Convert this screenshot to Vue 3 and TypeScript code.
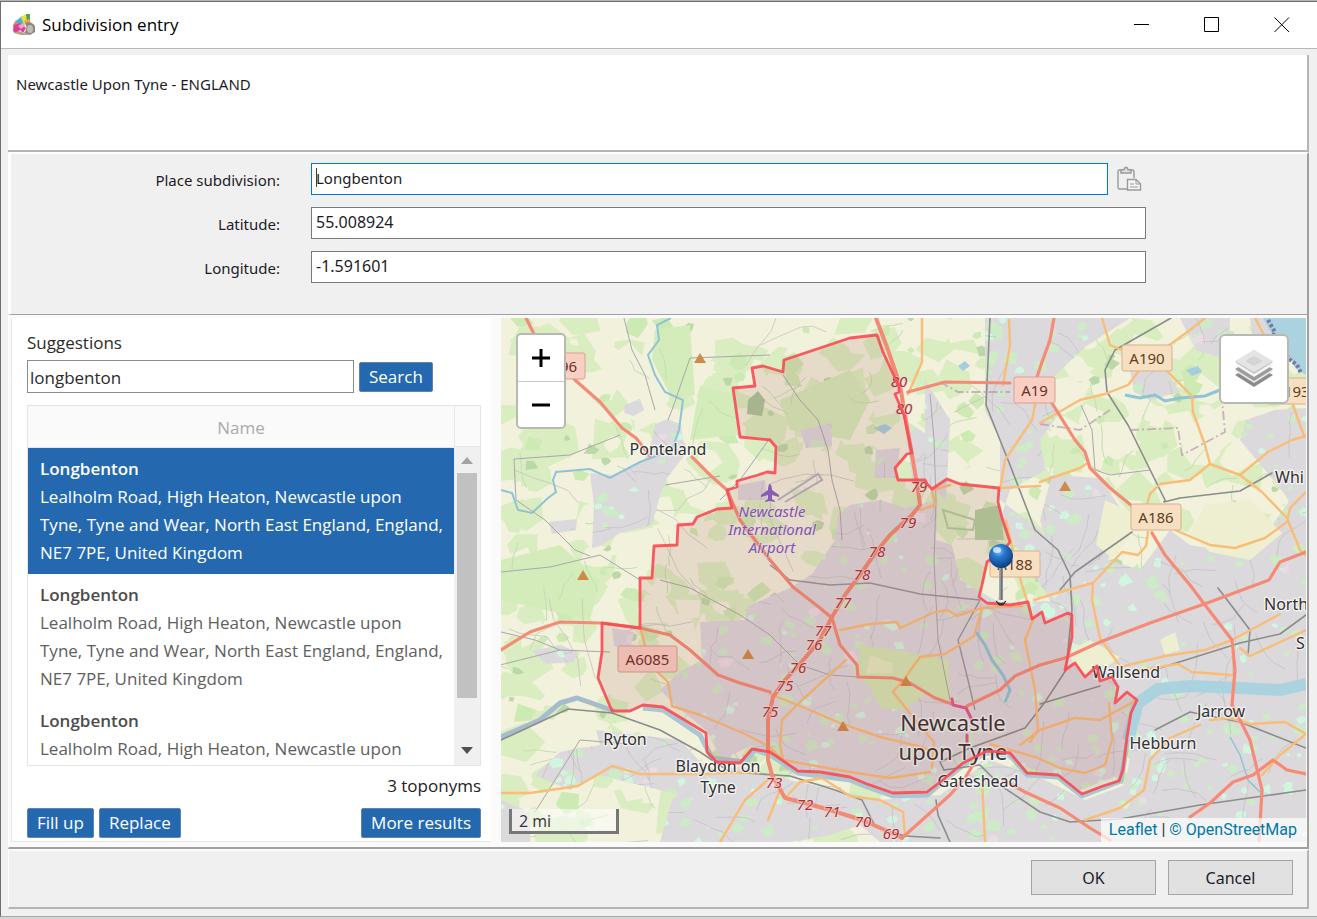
<script setup lang="ts">
import { ref } from 'vue'

interface Place { name: string; address: string }
interface Label { text: string; x: number; y: number; size?: number }
interface Shield { text: string; x: number; y: number; w: number; kind: 'primary' | 'secondary' }

const place = ref('Longbenton')
const latitude = ref('55.008924')
const longitude = ref('-1.591601')
const query = ref('longbenton')
const selected = ref(0)

const street = 'Lealholm Road, High Heaton, Newcastle upon'
const region = 'Tyne, Tyne and Wear, North East England, England, NE7 7PE, United Kingdom'
const places: Place[] = [
  { name: 'Longbenton', address: `${street} ${region}` },
  { name: 'Longbenton', address: `${street} ${region}` },
  { name: 'Longbenton', address: street },
]

// Small seeded generator so the land-use texture is stable between renders.
function makeRandom(seed: number): () => number {
  let s = seed
  return () => {
    s = (s * 1664525 + 1013904223) % 4294967296
    return s / 4294967296
  }
}

function patches(seed: number, count: number, min: number, max: number): string {
  const rnd = makeRandom(seed)
  let d = ''
  for (let i = 0; i < count; i++) {
    const cx = 501 + rnd() * 805
    const cy = 318 + rnd() * 524
    const n = 4 + Math.floor(rnd() * 4)
    const r = min + rnd() * (max - min)
    const turn = rnd() * 6
    for (let k = 0; k < n; k++) {
      const a = turn + (k / n) * Math.PI * 2
      const q = r * (0.55 + rnd() * 0.7)
      d += `${k ? 'L' : 'M'}${(cx + Math.cos(a) * q * 1.2).toFixed(1)} ${(cy + Math.sin(a) * q).toFixed(1)}`
    }
    d += 'Z'
  }
  return d
}

function lanes(seed: number, count: number, len: number): string {
  const rnd = makeRandom(seed)
  let d = ''
  for (let i = 0; i < count; i++) {
    let x = 501 + rnd() * 805
    let y = 318 + rnd() * 524
    let a = rnd() * 6.28
    d += `M${x.toFixed(1)} ${y.toFixed(1)}`
    for (let k = 0; k < 4; k++) {
      a += (rnd() - 0.5) * 0.9
      x += Math.cos(a) * len * (0.5 + rnd())
      y += Math.sin(a) * len * (0.5 + rnd())
      d += `L${x.toFixed(1)} ${y.toFixed(1)}`
    }
  }
  return d
}

const fields = patches(11, 330, 7, 25)
const meadows = patches(29, 110, 4, 12)
const woods = patches(47, 80, 3, 7)
const cream = patches(83, 170, 6, 20)
const parks = patches(61, 480, 2, 7)
const pitches = patches(73, 260, 2, 6)
const estates = patches(97, 60, 2, 7)
const hedges = lanes(5, 110, 8)
const countryLanes = lanes(17, 36, 20)
const streets = lanes(31, 300, 11)

const urban = [
  'M655 424L668 419L681 425L683 440L687 452L667 478L660 495L652 525L620 533L600 546L592 548L594 505L590 473L612 475L645 459L652 440Z',
  'M549 522L577 519L576 530L552 534Z M625 405L640 399L644 410L634 416L624 413Z',
  'M700 622L745 620L748 606L790 588L812 574L835 540L838 516L850 505L880 500L905 508L938 500L936 540L952 545L960 580L1000 603L1075 600L1130 700L1120 775L1080 790L1040 772L985 750L930 790L890 792L800 770L752 745L722 760L706 730L676 706L660 690L680 672L702 660Z',
  'M876 450L900 448L896 478L874 478Z M800 430L832 423L832 446L806 448Z M905 420L935 440L938 490L912 480Z M925 380L950 420L946 500L925 480Z M738 485L765 480L768 500L738 500Z M612 628L634 632L630 650L614 646Z',
  'M985 318L1095 318L1130 318L1085 347L1045 385L1058 415L1040 440L1045 470L1010 490L1000 520L1025 560L1050 600L1080 640L1140 700L1306 700L1306 842L880 842L860 825L830 835L790 842L660 842L672 800L700 775L740 766L790 780L880 800L940 795L990 760L1045 780L1085 800L1125 785L1140 700L1090 660L1070 580L1040 530L1000 500L1000 440L985 410Z',
  'M1052 475L1100 478L1125 515L1108 560L1140 570L1170 530L1190 545L1220 550L1265 535L1290 500L1240 440L1246 420L1275 410L1306 408L1306 720L1100 720L1060 590L1040 520Z',
  'M1130 370L1165 370L1180 392L1150 400L1134 392Z M1180 318L1230 318L1228 360L1196 350Z M1250 318L1275 318L1285 400L1260 400Z',
  'M532 651L560 645L578 652L574 662L546 664Z M596 730L680 740L706 768L700 800L660 790L600 775L570 790L535 775L560 752L600 745Z M501 800L530 812L530 842L501 842Z',
]
const farms = [
  'M1105 500L1130 512L1132 535L1112 558L1096 545Z',
  'M1205 505L1250 500L1282 533L1250 560L1210 552L1190 535Z',
  'M1068 652L1090 640L1120 657L1108 666L1098 664L1085 675L1074 664Z',
  'M1160 640L1175 632L1180 650L1165 655Z',
]
const townMoor = 'M860 645L905 652L948 660L950 702L925 694L905 710L880 708L872 690L858 676Z'

const trunk = [
  'M526 318L536 338L575 380L600 402L622 428L636 438L650 456 M692 457L710 475L727 490L740 520L770 560L793 587L820 608L832 618L840 645L857 665L858 677L893 678L910 683L935 698L952 704',
  'M908 392L945 382L1010 383 M1054 318L1050 340L1042 362L1036 380 M1050 400L1075 440L1085 452L1090 468L1110 488L1132 506 M1152 533L1165 555L1190 585L1205 605L1232 640L1235 670L1232 705L1240 720L1250 740L1262 790L1259 842',
  'M967 706L1000 690L1015 676L1040 665L1065 658L1100 642L1150 623L1210 602L1269 580L1280 562L1306 552',
  'M501 650L530 632L560 622L600 623L640 628L670 635L690 650L718 675L740 683L770 692',
  'M1190 817L1210 803L1233 782L1253 775L1273 760L1287 770L1306 774 M1003 780L1025 792L1060 808L1090 828L1110 840 M902 838L950 795L965 778L975 762',
]
const motorway = 'M876 318L888 350L900 385L905 415L912 455L918 490L920 505L912 515L903 523L890 535L876 552L862 572L845 595L832 617L820 640L805 658L785 680L773 697L768 720L768 760L772 775L785 798L805 803L830 810L862 820L885 830L902 838'
const secondary = [
  'M922 318L922 362L912 385L908 394 M1009 320L1010 345L1003 385',
  'M1102 318L1110 345L1122 350 M1205 318L1190 330L1168 346 M1138 372L1128 385L1105 394L1080 400L1040 423 M1168 372L1184 388L1192 396L1193 412L1205 445L1210 464L1240 475L1262 492L1287 518L1300 550L1306 556',
  'M1210 464L1190 480L1160 484L1150 494L1146 508 M1040 482L1080 468L1086 464 M1240 475L1268 452L1292 440L1306 436 M1306 492L1290 508L1287 522L1265 538L1235 548L1210 545L1175 530',
  'M1148 532L1146 546L1138 555L1122 552L1093 583L1092 600L1100 638L1120 666 M1093 583L1060 592L1034 600 M950 485L932 490L935 505L920 510',
  'M999 488L1040 486 M1000 490L1005 460L1032 420L1036 400 M1006 520L1014 555L1022 585L1033 620L1025 640L1035 690L1038 730L1030 742',
  'M840 630L870 624L897 622L900 628L935 612L948 610L957 616L982 608L1022 606 M982 608L974 636L945 654L920 657L905 678L893 692L920 726L934 742L932 768',
  'M641 630L650 665L668 682L672 706L700 715L745 734L768 746L783 760L850 772L890 778L930 772 M770 694L800 706L840 723L880 737L918 746L935 752',
  'M846 660L800 702L782 720L780 745L783 760 M1137 700L1100 720L1075 718L1040 730L1020 745 M1109 703L1112 740L1105 765L1085 773L1060 768L1038 758L990 744',
  'M1120 667L1165 656L1205 650L1232 640L1260 625L1280 614 M1240 648L1250 656L1276 644L1306 630 M1140 670L1178 664L1192 672L1232 675 M1210 720L1230 718L1250 724L1285 722L1306 734L1280 755L1262 775',
  'M1200 725L1170 738L1150 760L1144 790L1120 808L1085 820 M501 793L530 793L578 786L612 766L640 774L700 774L760 772 M785 798L800 782L822 778L850 796L880 800L903 812L905 835 M982 780L985 842 M768 820L780 790',
  'M1255 318L1272 350 M1292 402L1304 436 M770 778L745 800L720 842',
]
const rails = [
  'M1171 318L1115 350L1105 370L1107 392L1128 425L1165 500L1164 502 M1164 502L1180 498L1240 491L1272 473 M1132 532L1075 572L1060 590 M990 318L986 405L1010 465L1035 530L1058 550L1070 575L1072 610L1066 670L1045 702L1025 728L970 748L940 762L944 770',
  'M501 740L568 709L612 713L660 730L700 752L730 772L790 776L835 790L862 800L875 826L905 836L940 838 M936 800L938 815L950 842 M944 770L980 765L1000 785L1040 812L1070 822L1120 819L1200 805L1306 790',
  'M1100 686L1040 704 M1160 668L1240 643L1280 634L1306 615 M1218 588L1250 630L1248 655 M1155 730L1190 712L1240 722L1306 748',
]
const boundary = 'M752 368L763 366L783 372L784 360L850 338L877 335L883 352L895 378L899 385L899 392L895 394L898 401L904 415L912 453L907 454L895 468L898 480L925 480L927 484L932 489L947 479L960 484L999 488L998 502L1002 518L1010 542L1004 550L987 562L982 585L979 597L987 603L1010 605L1028 602L1032 619L1042 612L1045 623L1068 613L1072 615L1072 637L1065 670L1075 663L1085 677L1097 666L1100 681L1112 677L1118 687L1115 703L1127 692L1137 700L1131 713L1127 737L1123 770L1119 781L1103 786L1082 794L1058 775L1027 773L1010 753L987 751L963 763L943 780L927 792L893 793L867 784L850 777L820 772L798 771L770 752L752 749L740 763L717 762L707 752L706 733L663 707L643 705L630 711L612 711L598 678L602 652L602 623L640 628L640 578L652 578L654 546L677 545L678 525L693 524L697 517L717 509L732 508L727 490L737 487L737 481L758 475L767 472L775 473L776 447L770 440L740 437L733 388L755 386Z'

const towns: Label[] = [
  { text: 'Ponteland', x: 668, y: 455 },
  { text: 'Ryton', x: 625, y: 745 },
  { text: 'Blaydon on', x: 718, y: 772 },
  { text: 'Tyne', x: 718, y: 793 },
  { text: 'Newcastle', x: 953, y: 731, size: 22 },
  { text: 'upon Tyne', x: 953, y: 760, size: 22 },
  { text: 'Gateshead', x: 978, y: 787 },
  { text: 'Wallsend', x: 1126, y: 678 },
  { text: 'Jarrow', x: 1221, y: 717 },
  { text: 'Hebburn', x: 1163, y: 749 },
]
const edgeTowns: Label[] = [
  { text: 'Whi', x: 1275, y: 483 },
  { text: 'North', x: 1264, y: 610 },
  { text: 'S', x: 1296, y: 649 },
]
const airport: Label[] = [
  { text: 'Newcastle', x: 772, y: 517 },
  { text: 'International', x: 772, y: 535 },
  { text: 'Airport', x: 772, y: 553 },
]
const junctions: Label[] = [
  { text: '80', x: 899, y: 387 }, { text: '80', x: 904, y: 414 },
  { text: '79', x: 919, y: 492 }, { text: '79', x: 908, y: 528 },
  { text: '78', x: 877, y: 557 }, { text: '78', x: 862, y: 580 },
  { text: '77', x: 843, y: 608 }, { text: '77', x: 823, y: 636 },
  { text: '76', x: 814, y: 650 }, { text: '76', x: 798, y: 673 },
  { text: '75', x: 785, y: 691 }, { text: '75', x: 770, y: 717 },
  { text: '73', x: 774, y: 788 }, { text: '72', x: 805, y: 810 },
  { text: '71', x: 832, y: 817 }, { text: '70', x: 863, y: 827 },
  { text: '69', x: 891, y: 839 },
]
const shields: Shield[] = [
  { text: 'A696', x: 534, y: 353, w: 51, kind: 'primary' },
  { text: 'A19', x: 1014, y: 377, w: 41, kind: 'primary' },
  { text: 'A190', x: 1122, y: 345, w: 50, kind: 'secondary' },
  { text: 'A193', x: 1267, y: 378, w: 50, kind: 'secondary' },
  { text: 'A186', x: 1131, y: 504, w: 50, kind: 'secondary' },
  { text: 'A188', x: 990, y: 551, w: 50, kind: 'secondary' },
  { text: 'A6085', x: 618, y: 646, w: 59, kind: 'primary' },
]
const peaks = [[700, 358], [583, 575], [1065, 486], [748, 654], [906, 681], [843, 726]]
</script>

<template>
  <div class="desktop">
    <section class="window" aria-label="Subdivision entry">
      <header class="titlebar">
        <svg class="app-icon" viewBox="0 0 24 24" aria-hidden="true">
          <path d="M1 12L4 7L10 12L6 19L2 20Z" fill="#dd8f55" />
          <path d="M4 8L10 3L14 11L8 13Z" fill="#3fb4dc" />
          <path d="M9 4L14 1L17 2L16 8L12 12Z" fill="#ecdf3b" />
          <path d="M14 1L18 1L18 8L15 9Z" fill="#4fa05b" />
          <path d="M12 8L17 6L19 10L14 12Z" fill="#e7a64b" />
          <path d="M2 12L8 10L14 15L11 20L8 17L4 20L1 18Z" fill="#dd3f97" />
          <path d="M6 13L11 10L13 13L9 16Z" fill="#f4a3cd" />
          <path d="M13 10C17 8 21 10 23 13L23 19L18 22L12 20C15 17 15 13 13 10Z" fill="#8f8780" />
          <ellipse cx="18" cy="16" rx="3" ry="4" fill="#c2bcb6" />
          <path d="M2 20L7 18L12 20L18 22L9 22Z" fill="#b9a184" />
        </svg>
        <h1 class="title">Subdivision entry</h1>
        <div class="window-buttons">
          <button type="button" aria-label="Minimize">
            <svg viewBox="0 0 16 16"><path d="M0 7.500H15" stroke="#000" fill="none" /></svg>
          </button>
          <button type="button" aria-label="Maximize">
            <svg viewBox="0 0 16 16"><path d="M0.5 0.5H14.5V14.5H0.5Z" stroke="#000" fill="none" /></svg>
          </button>
          <button type="button" aria-label="Close">
            <svg viewBox="0 0 16 16"><path d="M0.5 0.5L15 15M15 0.5L0.5 15" stroke="#000" fill="none" /></svg>
          </button>
        </div>
      </header>

      <div class="content">
        <div class="place-path">Newcastle Upon Tyne - ENGLAND</div>

        <form class="fields" @submit.prevent>
          <label for="place">Place subdivision:</label>
          <div class="with-paste">
            <div class="active-field">
              <input id="place" v-model="place" type="text" class="field focused" />
              <span class="caret"></span>
            </div>
            <button type="button" class="paste" aria-label="Paste">
              <svg viewBox="0 0 26 26" fill="none" stroke="#9a9a9a">
                <path d="M6 4H3.500Q2 4 2 5.500V21.500Q2 23 3.500 23H11" stroke-width="1.400" />
                <path d="M14 4H16.500Q18 4 18 5.500V12" stroke-width="1.400" />
                <path d="M5 4L8 3.500L9 1.500H11L12 3.500L15 4V7H5Z" fill="#ddd" stroke-width="1.500" />
                <path d="M11.500 13.500H20L24.500 18V24H11.500Z" fill="#f5f5f5" stroke-width="1.400" />
                <path d="M20 13.500V18H24.500M14 18H18M14 21H22" />
              </svg>
            </button>
          </div>
          <label for="latitude">Latitude:</label>
          <input id="latitude" v-model="latitude" type="text" class="field number" />
          <label for="longitude">Longitude:</label>
          <input id="longitude" v-model="longitude" type="text" class="field number" />
        </form>

        <main class="workspace">
          <section class="suggestions">
            <label class="heading" for="query">Suggestions</label>
            <div class="search-row">
              <input id="query" v-model="query" type="text" class="query" />
              <button type="button" class="blue">Search</button>
            </div>
            <div class="results">
              <div class="table-clip">
                <table>
                  <thead>
                    <tr><th scope="col">Name</th></tr>
                  </thead>
                  <tbody>
                    <tr v-for="(p, i) in places" :key="i" :class="{ selected: i === selected }" @click="selected = i">
                      <td><strong>{{ p.name }}</strong><span>{{ p.address }}</span></td>
                    </tr>
                  </tbody>
                </table>
              </div>
              <div class="gutter" aria-hidden="true">
                <div class="gutter-head"></div>
                <div class="scrollbar">
                  <svg viewBox="0 0 12 7"><path d="M0 7L6 0L12 7Z" fill="#a3a3a3" /></svg>
                  <div class="thumb"></div>
                  <svg viewBox="0 0 12 7"><path d="M0 0H12L6 7Z" fill="#505050" /></svg>
                </div>
              </div>
            </div>
            <p class="count">3 toponyms</p>
            <div class="actions">
              <button type="button" class="blue">Fill up</button>
              <button type="button" class="blue">Replace</button>
              <button type="button" class="blue last">More results</button>
            </div>
          </section>

          <section class="map" aria-label="Map">
            <svg class="tiles" viewBox="501 318 805 524" preserveAspectRatio="xMidYMid slice">
              <defs>
                <clipPath id="urban-clip"><path v-for="d in urban" :key="d" :d="d" /></clipPath>
                <radialGradient id="pin-ball" cx="0.4" cy="0.3" r="0.7">
                  <stop offset="0" stop-color="#8cc4f4" />
                  <stop offset="0.35" stop-color="#2b7bd0" />
                  <stop offset="1" stop-color="#093f86" />
                </radialGradient>
              </defs>
              <rect x="501" y="318" width="805" height="524" fill="#f1f1dc" />
              <path :d="fields" fill="#d9edc0" />
              <path :d="cream" fill="#f1f1dc" />
              <path :d="meadows" fill="#cde9b4" />
              <path :d="woods" fill="#bbd9a8" />
              <path d="M655 330L690 325L695 395L672 398L652 360Z M780 400L850 370L870 400L850 440L790 430Z M700 385L735 395L738 435L690 440Z M501 560L560 545L600 580L590 620L501 600Z" fill="#d4ecba" />
              <path :d="hedges" fill="none" stroke="#c3dfb2" />
              <path :d="countryLanes" fill="none" stroke="#c6c4c2" stroke-width="0.8" />

              <path v-for="d in urban" :key="d" :d="d" fill="#dbd9db" />
              <g clip-path="url(#urban-clip)">
                <path :d="parks" fill="#cdebc6" />
                <path :d="pitches" fill="#d2f5e0" />
                <path :d="estates" fill="#e9dce4" />
                <path :d="streets" fill="none" stroke="#bdbabd" stroke-width="0.600" />
              </g>
              <path v-for="d in farms" :key="d" :d="d" fill="#eeefd0" />
              <path :d="townMoor" fill="#d3e8b3" />
              <path d="M870 655L893 664L892 673L866 674Z" fill="#e3ebc0" />
              <path d="M943 510L975 520L973 530L948 528Z" fill="none" stroke="#b2cfa0" stroke-width="2" />
              <path d="M975 510L1000 505L1004 540L975 540Z" fill="#b2d0a0" />
              <path d="M748 400L758 391L765 400L762 416L747 414Z" fill="#a9c59a" />
              <path d="M874 428L885 424L892 428L884 434Z M958 366L965 361L970 366L963 371Z M1186 370L1198 366L1202 372L1192 376Z" fill="#a4cde0" />
              <path d="M1263 318L1306 318L1306 375L1295 368L1285 345L1275 340Z" fill="#aad3df" />
              <path d="M1268 320L1275 332L1272 338L1284 344L1288 358L1297 365L1301 373" fill="none" stroke="#7679a8" stroke-width="4" stroke-dasharray="3 2" />

              <g fill="none" stroke="#8fc3d6">
                <path d="M671 318L657 325L659 340L648 355L655 375L665 392L683 400L679 430L672 450L640 462L610 478L590 469L556 472L553 480L556 492L548 498L532 513L518 510L512 493L501 490" stroke-width="2" />
                <path d="M1125 395L1140 398L1155 395L1165 401L1180 398L1205 396L1220 390" stroke-width="3" />
                <path d="M976 632L985 645L992 660L1003 675L1010 690L1005 702" stroke-width="3" />
                <path d="M1230 737L1240 755L1248 780L1260 792" stroke-width="1.500" />
              </g>
              <g fill="none" stroke-linejoin="round">
                <path d="M501 737L540 720L560 703L577 698L600 706L614 711" stroke="#a6bccd" stroke-width="5" />
                <path d="M643 708L663 710L700 735L712 758L745 762L755 750L770 755L798 773L850 780L867 787L893 796L927 795L963 765L987 753L1010 755L1027 775L1058 777L1082 796L1121 781L1130 725L1140 697" stroke="#aac6d2" stroke-width="5" />
                <path d="M1128 740L1138 703L1158 689L1190 686L1240 688L1280 690L1306 684" stroke="#aad3df" stroke-width="12" />
              </g>

              <g fill="none" stroke="#aaa8aa" stroke-width="1">
                <path d="M624 318L632 350L645 375L655 410 M668 420L672 410L690 358L770 355 M501 572L550 567L600 555L640 580 M514 459L570 455L620 435 M514 459L516 500L545 520L575 550L590 556" />
                <path d="M783 375L800 400L818 420L828 450L832 480L840 510L842 540 M720 500L740 480L770 438 M500 665L560 650L610 652 M665 485L720 476" />
                <path d="M660 580L690 588L740 615L770 635L800 665L830 675L858 677 M930 394L934 440L936 500L934 560L938 640L950 700" />
                <path d="M501 632L535 640L560 650 M535 812L580 740L640 745 M1081 405L1092 430L1095 470L1110 475L1150 470" />
                <path d="M770 565L790 580L830 585L870 583L920 594L980 600 M980 600L958 640L968 680L975 710" stroke="#999799" stroke-width="1.400" />
              </g>
              <path d="M1040 424L1080 430L1110 410M1130 430L1178 428L1182 455L1225 432L1222 400M940 382L958 392L1010 392" fill="none" stroke="#b898ac" stroke-width="1.800" stroke-dasharray="9 3 2 3" opacity="0.7" />
              <path d="M778 500L818 474L822 480L785 502" fill="none" stroke="#b7afc6" stroke-width="2" />

              <g fill="none" stroke-linejoin="round" stroke-linecap="round">
                <path v-for="d in rails" :key="d" :d="d" stroke="#8a8d8a" stroke-width="1.600" />
                <path v-for="d in secondary" :key="d" :d="d" stroke="#f9bd78" stroke-width="2.400" />
                <path v-for="d in trunk" :key="d" :d="d" stroke="#f58b76" stroke-width="3.200" />
                <path :d="motorway" stroke="#f38a74" stroke-width="4" />
                <path d="M952 699L953 705L966 708L972 720 M967 735L967 742" stroke="#e0588e" stroke-width="3" />
              </g>

              <g v-for="s in shields" :key="s.text" :class="['shield', s.kind]">
                <rect :x="s.x" :y="s.y" :width="s.w" height="26" rx="2" />
                <text :x="s.x + s.w / 2" :y="s.y + 19" text-anchor="middle">{{ s.text }}</text>
              </g>
              <path v-for="(p, i) in peaks" :key="i" :d="`M${p[0] - 6} ${p[1] + 5}L${p[0]} ${p[1] - 5}L${p[0] + 6} ${p[1] + 5}Z`" fill="#d08a4a" />

              <path d="M770 484C771 484 772 487 772 490L779 495V497L772 495V499L775 501V502L770 501L765 502V501L768 499V495L761 497V495L768 490C768 487 769 484 770 484Z" fill="#8461c4" />
              <g class="airport">
                <text v-for="l in airport" :key="l.text" :x="l.x" :y="l.y">{{ l.text }}</text>
              </g>
              <g class="junction">
                <text v-for="(l, i) in junctions" :key="i" :x="l.x" :y="l.y">{{ l.text }}</text>
              </g>
              <g class="town">
                <text v-for="l in towns" :key="l.text" :x="l.x" :y="l.y" :font-size="l.size ?? 16">{{ l.text }}</text>
              </g>
              <g class="town edge">
                <text v-for="l in edgeTowns" :key="l.text" :x="l.x" :y="l.y" font-size="16">{{ l.text }}</text>
              </g>

              <path :d="boundary" fill="#a03c3c" fill-opacity="0.12" stroke="#fa4c55" stroke-width="2.800" stroke-linejoin="round" stroke-opacity="0.92" />

              <path d="M1001 566V600" stroke="#6d7076" stroke-width="3.500" />
              <path d="M1000 566V600" stroke="#b9bcc0" stroke-width="1" />
              <path d="M996 601Q1001 606 1006 601L1003 605H999Z" fill="#333" stroke="#333" />
              <circle cx="1001" cy="556" r="12" fill="url(#pin-ball)" />
              <ellipse cx="997" cy="550" rx="4" ry="3" fill="#e6f3ff" opacity="0.75" />
            </svg>

            <div class="zoom">
              <button type="button" aria-label="Zoom in"><svg viewBox="0 0 20 20"><path d="M1 10H19M10 1V19" /></svg></button>
              <button type="button" aria-label="Zoom out"><svg viewBox="0 0 20 20"><path d="M1 10H19" /></svg></button>
            </div>
            <button type="button" class="layers" aria-label="Layers">
              <svg viewBox="0 0 40 38">
                <path d="M1 25L20 14L39 25L20 37Z" fill="#8b8b8b" />
                <path d="M1 21L20 10L39 21L20 33Z" fill="#e8e8e8" />
                <path d="M1 19L20 8L39 19L20 31Z" fill="#9c9c9c" />
                <path d="M1 15L20 4L39 15L20 27Z" fill="#f4f4f4" />
                <path d="M1 12L20 0L39 12L20 24Z" fill="#c6c6c6" />
                <path d="M1 11L20 0L39 11L20 22Z" fill="#e4e4e4" />
                <path d="M11 11L20 6L29 11L20 16Z" fill="#d4d4d4" />
              </svg>
            </button>
            <div class="scale">2 mi</div>
            <div class="attribution"><a href="#leaflet">Leaflet</a> | <a href="#openstreetmap">© OpenStreetMap</a></div>
          </section>
        </main>

        <footer class="footer">
          <button type="button">OK</button>
          <button type="button">Cancel</button>
        </footer>
      </div>
    </section>
  </div>
</template>

<style>
body { background: #f0f0f0; }
</style>

<style scoped>
* { box-sizing: border-box; }
button, input { font: inherit; color: inherit; margin: 0; }
button { cursor: pointer; }

.desktop {
  height: 100vh;
  display: flex;
  flex-direction: column;
  border-top: 1px solid #b4b4b0;
  border-bottom: 2px solid #d4d4d4;
  font-family: "Open Sans", "Noto Sans", sans-serif;
  font-size: 17px;
}
.window {
  flex: 1;
  min-height: 0;
  display: flex;
  flex-direction: column;
  background: #f0f0f0;
  border: 1px solid #6e6e6e;
  border-right: 0;
  border-bottom-color: #a8a8a8;
}

.titlebar {
  flex: none;
  height: 47px;
  display: flex;
  align-items: center;
  padding-left: 11px;
  background: #fff;
  border-bottom: 1px solid #b8b8b8;
}
.app-icon { width: 24px; height: 24px; }
.title { margin: 0 0 0 6px; font-size: 17px; font-weight: 400; line-height: 24px; color: #000; }
.window-buttons { margin-left: auto; display: flex; }
.window-buttons button {
  width: 70px;
  height: 46px;
  display: grid;
  place-items: center;
  border: 0;
  background: none;
}
.window-buttons svg { width: 16px; height: 16px; }

.content {
  flex: 1;
  min-height: 0;
  display: flex;
  flex-direction: column;
  padding: 6px 8px 7px 7px;
}

.place-path {
  flex: none;
  height: 97px;
  padding: 17px 8px;
  background: #fff;
  border-right: 2px solid #b4b4b4;
  border-bottom: 2px solid #b4b4b4;
  font-family: "Noto Sans", sans-serif;
  font-size: 15px;
  line-height: 24px;
  color: #1c1c28;
}

.fields {
  flex: none;
  height: 163px;
  display: grid;
  grid-template-columns: 269px 1fr;
  grid-auto-rows: 32px;
  column-gap: 31px;
  row-gap: 12px;
  padding: 9px 161px 0 0;
  border-top: 2px solid #fff;
  border-left: 3px solid #fff;
  border-right: 2px solid #a0a0a0;
  border-bottom: 1px solid #a0a0a0;
  font-family: "Noto Sans", sans-serif;
  font-size: 15px;
  color: #1c1c28;
}
.fields label { text-align: right; line-height: 34px; }
.field {
  width: 100%;
  height: 32px;
  padding: 0 4px 2px;
  border: 1px solid #7a7a7a;
  border-radius: 0;
  background: #fff;
  outline: 0;
}
.number { font-size: 16px; }
.with-paste { display: flex; }
.active-field { position: relative; flex: 1; }
.focused { border-color: #0078d7; }
.caret { position: absolute; left: 5px; top: 5px; width: 1px; height: 19px; background: #2b4b2b; }
.paste { width: 38px; padding: 3px 4px 3px 8px; border: 0; background: none; }
.paste svg { display: block; width: 26px; height: 26px; }

.workspace {
  flex: 1;
  min-height: 0;
  display: flex;
  gap: 10px;
  padding: 3px 1px 5px 2px;
  background: #fafafa;
  border-left: 1px solid #fff;
  border-right: 2px solid #a0a0a0;
  border-bottom: 2px solid #a0a0a0;
}

.suggestions {
  flex: 0 0 480px;
  display: flex;
  flex-direction: column;
  padding: 11px 10px 3px 15px;
  background: #fff;
  border-left: 1px solid #e6e6e6;
  border-bottom: 1px solid #e6e6e6;
}
.heading { line-height: 28px; color: #2b2b2b; }
.search-row { display: flex; align-items: center; gap: 5px; margin-top: 3px; }
.query {
  width: 327px;
  height: 33px;
  padding: 2px 2px 0;
  border: 1px solid #8c8c8c;
  border-radius: 0;
  outline: 0;
  color: #2b2b2b;
}
.blue {
  height: 30px;
  padding: 0 9px;
  border: 1px solid #6183a5;
  border-radius: 2px;
  background: #2469b0;
  color: #fff;
  line-height: 26px;
}

.results {
  flex: 1;
  min-height: 0;
  display: flex;
  margin-top: 12px;
  border: 1px solid #e4e4e4;
}
.table-clip { flex: 1; min-width: 0; overflow: hidden; }
table { width: 100%; border-collapse: collapse; table-layout: fixed; }
th {
  height: 41px;
  padding: 4px 0 0;
  background: #fafafa;
  border-bottom: 1px solid #e6e6e6;
  color: #ababab;
  font-weight: 400;
  line-height: 28px;
}
td { padding: 7px 8px 7px 12px; line-height: 28px; color: #606060; cursor: pointer; }
td strong { display: block; color: #4c4c4c; font-weight: 600; }
td span { display: block; }
.selected td { background: #2469b0; color: #fff; }
.selected strong { color: #fff; }

.gutter { width: 26px; display: flex; flex-direction: column; }
.gutter-head { height: 41px; background: #fafafa; border-left: 1px solid #e6e6e6; border-bottom: 1px solid #e6e6e6; }
.scrollbar {
  flex: 1;
  display: flex;
  flex-direction: column;
  align-items: center;
  padding: 10px 3px 11px 2px;
  background: #f0f0f0;
}
.scrollbar svg { width: 12px; height: 7px; }
.thumb { width: 20px; height: 225px; margin: 9px 0 auto; background: #c1c1c1; }

.count { margin: 8px 0 0; text-align: right; line-height: 24px; color: #222; }
.actions { display: flex; gap: 5px; margin-top: 10px; }
.last { margin-left: auto; }

.map { position: relative; flex: 1; min-width: 0; overflow: hidden; }
.tiles { display: block; width: 100%; height: 100%; font-family: "Noto Sans", sans-serif; }
.shield text { font-size: 15px; }
.primary rect { fill: #f9cfc4; stroke: #dd9f8f; }
.primary text { fill: #6a3028; }
.secondary rect { fill: #f8dfc2; stroke: #d6b28c; }
.secondary text { fill: #5e4024; }
.airport text { font-size: 15px; font-style: italic; fill: #7d5bc0; text-anchor: middle; stroke: #f4eef0; stroke-width: 2px; stroke-opacity: 0.5; paint-order: stroke; }
.junction text { font-size: 15px; font-style: italic; fill: #a8323c; text-anchor: middle; stroke: #f5dcd4; stroke-width: 2px; stroke-opacity: 0.7; paint-order: stroke; }
.town text { fill: #333; text-anchor: middle; stroke: #fff; stroke-width: 3px; stroke-opacity: 0.6; stroke-linejoin: round; paint-order: stroke; }
.edge text { text-anchor: start; }

.zoom {
  position: absolute;
  left: 15px;
  top: 15px;
  border: 2px solid #b9b9b4;
  border-radius: 5px;
  background: #fff;
}
.zoom button {
  width: 46px;
  height: 46px;
  display: grid;
  place-items: center;
  border: 0;
  background: none;
}
.zoom button + button { border-top: 1px solid #ccc; }
.zoom svg { width: 20px; height: 20px; stroke: #000; stroke-width: 3px; }
.layers {
  position: absolute;
  right: 17px;
  top: 16px;
  width: 70px;
  height: 70px;
  display: grid;
  place-items: center;
  border: 2px solid #b9b9b4;
  border-radius: 6px;
  background: #fff;
}
.layers svg { width: 40px; height: 38px; }
.scale {
  position: absolute;
  left: 8px;
  bottom: 8px;
  width: 110px;
  height: 25px;
  padding-left: 7px;
  border: 3px solid #777;
  border-top: 0;
  background: rgba(255, 255, 255, 0.5);
  font-size: 16px;
  line-height: 24px;
  color: #333;
}
.attribution {
  position: absolute;
  right: 0;
  bottom: 0;
  padding: 0 9px 0 8px;
  background: rgba(255, 255, 255, 0.7);
  font-family: Roboto, "Liberation Sans", Arial, sans-serif;
  font-size: 16px;
  line-height: 24px;
  color: #333;
}
.attribution a { color: #0078a8; text-decoration: none; }

.footer {
  flex: none;
  height: 60px;
  display: flex;
  justify-content: flex-end;
  align-items: flex-start;
  gap: 12px;
  padding: 9px 14px 0;
  border-top: 2px solid #fafafa;
  border-left: 1px solid #fff;
  border-right: 2px solid #b4b4b4;
  border-bottom: 2px solid #b4b4b4;
}
.footer button {
  width: 125px;
  height: 35px;
  border: 1px solid #a4a4a4;
  background: #e1e1e1;
  font-family: "Noto Sans", sans-serif;
  font-size: 16px;
  color: #1c1c28;
}
</style>
